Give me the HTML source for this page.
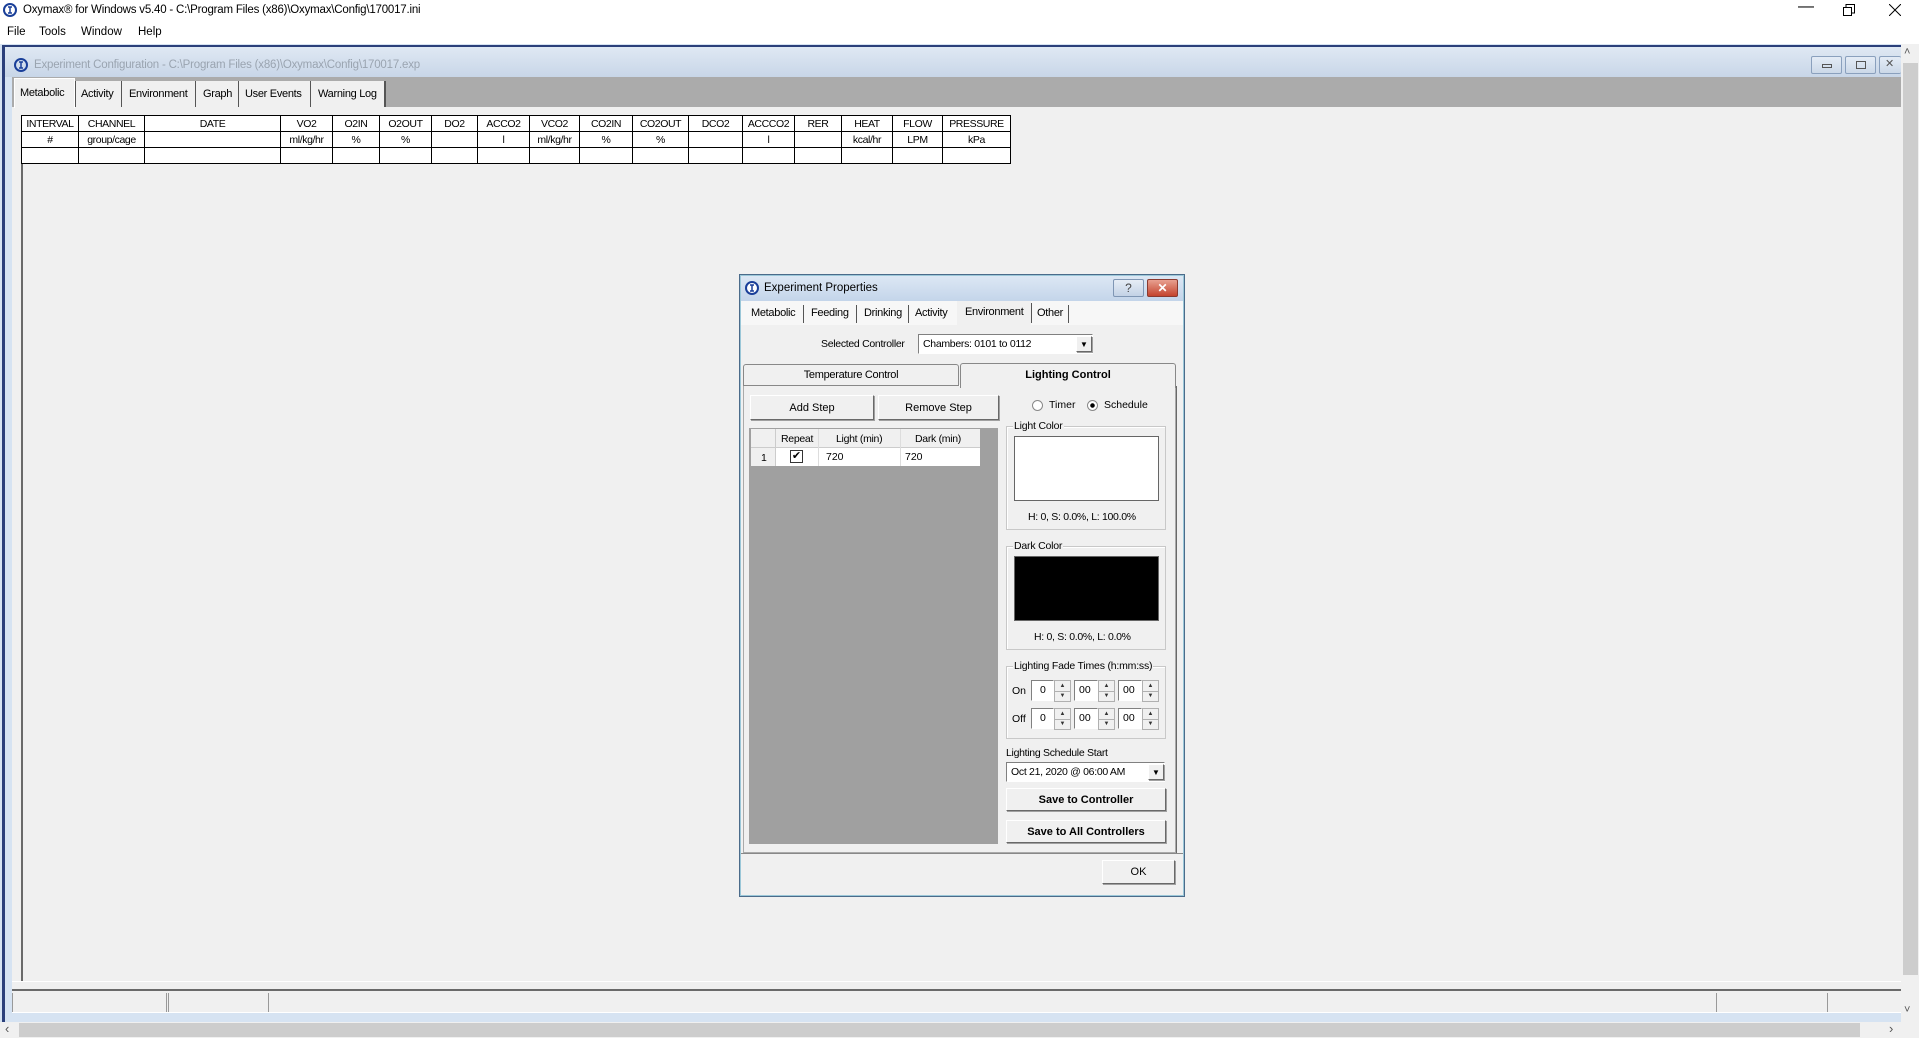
<!DOCTYPE html>
<html><head><meta charset="utf-8"><style>
*{margin:0;padding:0;box-sizing:border-box}
body{width:1919px;height:1038px;overflow:hidden;background:#f0f0f0;font-family:"Liberation Sans",sans-serif;font-size:11px;color:#000;position:relative}
.a{position:absolute}
.t{position:absolute;white-space:nowrap}
.btn{position:absolute;background:#f0f0f0;border:1px solid;border-color:#fff #696969 #696969 #fff;box-shadow:1px 1px 0 #a0a0a0;display:flex;align-items:center;justify-content:center;font-size:11px;white-space:nowrap}
.grp{position:absolute;border:1px solid #c8c8c8;box-shadow:inset 1px 1px 0 #fff}
.grp>span{position:absolute;top:-7px;left:6px;background:#f0f0f0;padding:0 1px;font-size:10.5px;white-space:nowrap;letter-spacing:-0.2px}
table.g{border-collapse:collapse;position:absolute;left:21px;top:115px;font-size:10.5px;table-layout:fixed;background:#fff}
table.g td{border:1px solid #000;height:16px;text-align:center;padding:0;letter-spacing:-0.4px;overflow:hidden;white-space:nowrap}
.fld{position:absolute;background:#fff;border:1px solid;border-color:#808080 #fff #fff #808080;font-size:10.5px;padding-left:7px;line-height:18px;white-space:nowrap}
.spin{position:absolute;width:17px;height:22px;border:1px solid #b0b0b0;background:#f0f0f0;font-size:6px;line-height:10px;text-align:center;color:#333}
.spin:after{content:"";position:absolute;left:0;right:0;top:10px;border-top:1px solid #b0b0b0}
</style></head><body>
<div class="a" style="left:0;top:0;width:1919px;height:44px;background:#fff"></div>
<svg class="a" style="left:3px;top:3px" width="14" height="14"><circle cx="7" cy="7" r="6" fill="none" stroke="#1a3f99" stroke-width="2"/><path d="M5 4h4M7 4v6M5 10h4" stroke="#1a3f99" stroke-width="1.5"/></svg>
<div class="t" style="left:23px;top:4px;font-size:11.5px;letter-spacing:-0.2px">Oxymax® for Windows v5.40 - C:\Program Files (x86)\Oxymax\Config\170017.ini</div>
<div class="t" style="left:1798px;top:-2px;font-size:16px">—</div>
<svg class="a" style="left:1843px;top:4px" width="12" height="12"><rect x="0.5" y="3.5" width="8" height="8" fill="none" stroke="#000"/><path d="M3 3V0.5h8.5V9H9" fill="none" stroke="#000"/></svg>
<svg class="a" style="left:1889px;top:4px" width="12" height="12"><path d="M0 0L12 12M12 0L0 12" stroke="#000"/></svg>
<div class="t" style="left:7px;top:26px;font-size:11.5px">File</div>
<div class="t" style="left:39px;top:26px;font-size:11.5px">Tools</div>
<div class="t" style="left:81px;top:26px;font-size:11.5px">Window</div>
<div class="t" style="left:138px;top:26px;font-size:11.5px">Help</div>

<div class="a" style="left:0;top:44px;width:1901px;height:978px;background:#d6e3f2"></div>
<div class="a" style="left:4px;top:45px;width:1897px;height:2px;background:#2b3f7a"></div>
<div class="a" style="left:2px;top:45px;width:3px;height:977px;background:#2b3f7a"></div>
<div class="a" style="left:5px;top:47px;width:1896px;height:30px;background:linear-gradient(#dfe8f3,#c8d6e8)"></div>
<svg class="a" style="left:14px;top:58px" width="14" height="14"><circle cx="7" cy="7" r="6" fill="none" stroke="#1a3f99" stroke-width="2"/><path d="M5 4h4M7 4v6M5 10h4" stroke="#1a3f99" stroke-width="1.5"/></svg>
<div class="t" style="left:34px;top:59px;color:#9aa4b0;font-size:11.5px;letter-spacing:-0.2px">Experiment Configuration - C:\Program Files (x86)\Oxymax\Config\170017.exp</div>
<div class="a" style="left:1811px;top:56px;width:31px;height:18px;border:1px solid #8aa0bd;border-radius:2px;background:linear-gradient(#e4ecf6,#cbd8e8)"><div class="a" style="left:10px;top:7px;width:10px;height:4px;border:1px solid #555"></div></div>
<div class="a" style="left:1845px;top:56px;width:31px;height:18px;border:1px solid #8aa0bd;border-radius:2px;background:linear-gradient(#e4ecf6,#cbd8e8)"><div class="a" style="left:10px;top:4px;width:10px;height:8px;border:1px solid #555"></div></div>
<div class="a" style="left:1879px;top:56px;width:22px;height:18px;border:1px solid #8aa0bd;border-right:none;border-radius:2px;background:linear-gradient(#e4ecf6,#cbd8e8);font-size:11px;color:#555;padding-left:5px">✕</div>
<div class="a" style="left:12px;top:77px;width:1889px;height:30px;background:#ababab"></div>
<div class="a" style="left:12px;top:107px;width:1889px;height:905px;background:#f0f0f0"></div>
<div class="a" style="left:14px;top:78px;width:61px;height:30px;background:#f0f0f0;border:1px solid #fff;border-bottom:none"></div>
<div class="t" style="left:20px;top:87px;font-size:11px;letter-spacing:-0.3px">Metabolic</div>
<div class="a" style="left:75px;top:81px;width:310px;height:26px;background:#f0f0f0"></div>
<div class="a" style="left:75px;top:81px;width:1px;height:26px;background:#555"></div>
<div class="a" style="left:121px;top:81px;width:1px;height:26px;background:#555"></div>
<div class="a" style="left:195px;top:81px;width:1px;height:26px;background:#555"></div>
<div class="a" style="left:238px;top:81px;width:1px;height:26px;background:#555"></div>
<div class="a" style="left:310px;top:81px;width:1px;height:26px;background:#555"></div>
<div class="a" style="left:384px;top:81px;width:2px;height:26px;background:#555"></div>
<div class="t" style="left:81px;top:88px;font-size:11px;letter-spacing:-0.3px">Activity</div>
<div class="t" style="left:129px;top:88px;font-size:11px;letter-spacing:-0.3px">Environment</div>
<div class="t" style="left:203px;top:88px;font-size:11px;letter-spacing:-0.3px">Graph</div>
<div class="t" style="left:245px;top:88px;font-size:11px;letter-spacing:-0.3px">User Events</div>
<div class="t" style="left:318px;top:88px;font-size:11px;letter-spacing:-0.3px">Warning Log</div>
<div class="a" style="left:21px;top:116px;width:2px;height:865px;background:#6a6a6a"></div>
<table class="g">
<colgroup><col style="width:57px"><col style="width:66px"><col style="width:136px"><col style="width:52px"><col style="width:47px"><col style="width:52px"><col style="width:46px"><col style="width:52px"><col style="width:50px"><col style="width:53px"><col style="width:56px"><col style="width:54px"><col style="width:52px"><col style="width:47px"><col style="width:51px"><col style="width:50px"><col style="width:68px"></colgroup>
<tr><td>INTERVAL</td><td>CHANNEL</td><td>DATE</td><td>VO2</td><td>O2IN</td><td>O2OUT</td><td>DO2</td><td>ACCO2</td><td>VCO2</td><td>CO2IN</td><td>CO2OUT</td><td>DCO2</td><td>ACCCO2</td><td>RER</td><td>HEAT</td><td>FLOW</td><td>PRESSURE</td></tr>
<tr><td>#</td><td>group/cage</td><td></td><td>ml/kg/hr</td><td>%</td><td>%</td><td></td><td>l</td><td>ml/kg/hr</td><td>%</td><td>%</td><td></td><td>l</td><td></td><td>kcal/hr</td><td>LPM</td><td>kPa</td></tr>
<tr><td></td><td></td><td></td><td></td><td></td><td></td><td></td><td></td><td></td><td></td><td></td><td></td><td></td><td></td><td></td><td></td><td></td></tr>
</table>
<div class="a" style="left:12px;top:981px;width:1889px;height:1px;background:#fff"></div>
<div class="a" style="left:12px;top:989px;width:1889px;height:2px;background:#6a6a6a"></div>
<div class="a" style="left:12px;top:993px;width:1px;height:19px;background:#999"></div>
<div class="a" style="left:166px;top:993px;width:1px;height:19px;background:#999"></div>
<div class="a" style="left:168px;top:993px;width:1px;height:19px;background:#999"></div>
<div class="a" style="left:268px;top:993px;width:1px;height:19px;background:#999"></div>
<div class="a" style="left:1716px;top:993px;width:1px;height:19px;background:#999"></div>
<div class="a" style="left:1827px;top:993px;width:1px;height:19px;background:#999"></div>
<div class="a" style="left:12px;top:1012px;width:1889px;height:1px;background:#fff"></div>
<div class="a" style="left:1901px;top:44px;width:18px;height:978px;background:#f0f0f0"></div>
<div class="a" style="left:1903px;top:63px;width:15px;height:912px;background:#cdcdcd"></div>
<div class="t" style="left:1904px;top:46px;font-size:11px;color:#555">˄</div>
<div class="t" style="left:1904px;top:1004px;font-size:11px;color:#555">˅</div>
<div class="a" style="left:0;top:1022px;width:1919px;height:16px;background:#f0f0f0"></div>
<div class="a" style="left:19px;top:1023px;width:1841px;height:14px;background:#cdcdcd"></div>
<div class="t" style="left:5px;top:1021px;font-size:13px;color:#555">‹</div>
<div class="t" style="left:1889px;top:1021px;font-size:13px;color:#555">›</div>

<!-- dialog -->
<div class="a" style="left:739px;top:274px;width:446px;height:623px;background:#f0f0f0;border:1px solid #4b6b8a;box-shadow:inset 0 0 0 1px #9bc7d8"></div>
<div class="a" style="left:741px;top:276px;width:442px;height:25px;background:linear-gradient(#dce7f4,#c4d5ea)"></div>
<svg class="a" style="left:745px;top:281px" width="14" height="14"><circle cx="7" cy="7" r="6" fill="#fff" stroke="#1a3f99" stroke-width="2"/><path d="M5 4h4M7 4v6M5 10h4" stroke="#1a3f99" stroke-width="1.5"/></svg>
<div class="t" style="left:764px;top:282px;font-size:11.5px">Experiment Properties</div>
<div class="a" style="left:1113px;top:279px;width:31px;height:18px;border:1px solid #7f96b4;border-radius:2px;background:linear-gradient(#e6edf6,#c3d2e6);font-size:12px;color:#444;text-align:center;line-height:16px">?</div>
<div class="a" style="left:1147px;top:279px;width:31px;height:18px;border:1px solid #8a3a30;border-radius:2px;background:linear-gradient(#e8a090,#c4442e);font-size:12px;color:#fff;text-align:center;line-height:16px;font-weight:bold">✕</div>
<div class="a" style="left:741px;top:301px;width:442px;height:24px;background:#f7f7f7"></div>
<div class="a" style="left:957px;top:301px;width:74px;height:25px;background:#f0f0f0"></div>
<div class="t" style="left:751px;top:307px;font-size:11px;letter-spacing:-0.3px">Metabolic</div>
<div class="a" style="left:803px;top:305px;width:1px;height:18px;background:#555"></div>
<div class="t" style="left:811px;top:307px;font-size:11px;letter-spacing:-0.3px">Feeding</div>
<div class="a" style="left:856px;top:305px;width:1px;height:18px;background:#555"></div>
<div class="t" style="left:864px;top:307px;font-size:11px;letter-spacing:-0.3px">Drinking</div>
<div class="a" style="left:908px;top:305px;width:1px;height:18px;background:#555"></div>
<div class="t" style="left:915px;top:307px;font-size:11px;letter-spacing:-0.3px">Activity</div>
<div class="t" style="left:965px;top:306px;font-size:11px;letter-spacing:-0.3px">Environment</div>
<div class="a" style="left:1031px;top:303px;width:1px;height:20px;background:#555"></div>
<div class="t" style="left:1037px;top:307px;font-size:11px;letter-spacing:-0.3px">Other</div>
<div class="a" style="left:1068px;top:305px;width:1px;height:18px;background:#555"></div>
<div class="t" style="left:821px;top:338px;font-size:10.5px;letter-spacing:-0.3px">Selected Controller</div>
<div class="fld" style="left:918px;top:334px;width:175px;height:20px;padding-left:4px;letter-spacing:-0.3px">Chambers: 0101 to 0112</div>
<div class="btn" style="left:1076px;top:336px;width:16px;height:16px;font-size:8px">▼</div>
<div class="a" style="left:743px;top:385px;width:433px;height:468px;border:1px solid #aaa;border-top-color:#fff;box-shadow:1px 1px 0 #696969"></div>
<div class="a" style="left:743px;top:364px;width:216px;height:22px;border:1px solid #888;border-radius:3px 3px 0 0;background:#f0f0f0;font-size:11px;text-align:center;line-height:20px;letter-spacing:-0.3px">Temperature Control</div>
<div class="a" style="left:960px;top:363px;width:216px;height:25px;border:1px solid #888;border-bottom:none;border-radius:3px 3px 0 0;background:#f0f0f0;font-size:11px;font-weight:bold;text-align:center;line-height:22px">Lighting Control</div>
<div class="btn" style="left:750px;top:395px;width:124px;height:25px">Add Step</div>
<div class="btn" style="left:878px;top:395px;width:121px;height:25px">Remove Step</div>
<div class="a" style="left:749px;top:428px;width:249px;height:416px;background:#a0a0a0"></div>
<div class="a" style="left:751px;top:429px;width:229px;height:37px;background:#fff"></div>
<div class="a" style="left:751px;top:429px;width:229px;height:19px;background:#f0f0f0;border-bottom:1px solid #ccc"></div>
<div class="a" style="left:751px;top:448px;width:25px;height:18px;background:#f0f0f0"></div>
<div class="a" style="left:775px;top:429px;width:1px;height:37px;background:#ccc"></div>
<div class="a" style="left:818px;top:429px;width:1px;height:37px;background:#ddd"></div>
<div class="a" style="left:900px;top:429px;width:1px;height:37px;background:#ddd"></div>
<div class="t" style="left:781px;top:433px;font-size:10.5px;letter-spacing:-0.3px">Repeat</div>
<div class="t" style="left:836px;top:433px;font-size:10.5px;letter-spacing:-0.3px">Light (min)</div>
<div class="t" style="left:915px;top:433px;font-size:10.5px;letter-spacing:-0.3px">Dark (min)</div>
<div class="t" style="left:761px;top:452px;font-size:10.5px">1</div>
<div class="a" style="left:790px;top:450px;width:13px;height:13px;border:1px solid #333;background:#fff;font-size:11px;line-height:11px;text-align:center">✔</div>
<div class="t" style="left:826px;top:451px;font-size:10.5px">720</div>
<div class="t" style="left:905px;top:451px;font-size:10.5px">720</div>
<div class="a" style="left:1032px;top:400px;width:11px;height:11px;border-radius:50%;border:1px solid #888;background:#fff"></div>
<div class="t" style="left:1049px;top:399px;font-size:10.5px">Timer</div>
<div class="a" style="left:1087px;top:400px;width:11px;height:11px;border-radius:50%;border:1px solid #888;background:radial-gradient(#000 2px,#fff 2.5px)"></div>
<div class="t" style="left:1104px;top:399px;font-size:10.5px">Schedule</div>
<div class="grp" style="left:1006px;top:426px;width:160px;height:104px"><span>Light Color</span></div>
<div class="a" style="left:1014px;top:436px;width:145px;height:65px;background:#fff;border:1px solid #666"></div>
<div class="t" style="left:1028px;top:511px;font-size:10.5px;letter-spacing:-0.3px">H: 0, S: 0.0%, L: 100.0%</div>
<div class="grp" style="left:1006px;top:546px;width:160px;height:104px"><span>Dark Color</span></div>
<div class="a" style="left:1014px;top:556px;width:145px;height:65px;background:#000;border:1px solid #666"></div>
<div class="t" style="left:1034px;top:631px;font-size:10.5px;letter-spacing:-0.3px">H: 0, S: 0.0%, L: 0.0%</div>
<div class="grp" style="left:1006px;top:666px;width:160px;height:73px"><span>Lighting Fade Times (h:mm:ss)</span></div>
<div class="t" style="left:1012px;top:685px;font-size:10.5px">On</div>
<div class="t" style="left:1012px;top:713px;font-size:10.5px">Off</div>
<div class="fld" style="left:1031px;top:680px;width:23px;height:21px;padding-left:8px">0</div>
<div class="spin" style="left:1054px;top:680px">▲<br>▼</div>
<div class="fld" style="left:1074px;top:680px;width:24px;height:21px;padding-left:4px">00</div>
<div class="spin" style="left:1098px;top:680px">▲<br>▼</div>
<div class="fld" style="left:1118px;top:680px;width:24px;height:21px;padding-left:4px">00</div>
<div class="spin" style="left:1142px;top:680px">▲<br>▼</div>
<div class="fld" style="left:1031px;top:708px;width:23px;height:21px;padding-left:8px">0</div>
<div class="spin" style="left:1054px;top:708px">▲<br>▼</div>
<div class="fld" style="left:1074px;top:708px;width:24px;height:21px;padding-left:4px">00</div>
<div class="spin" style="left:1098px;top:708px">▲<br>▼</div>
<div class="fld" style="left:1118px;top:708px;width:24px;height:21px;padding-left:4px">00</div>
<div class="spin" style="left:1142px;top:708px">▲<br>▼</div>
<div class="t" style="left:1006px;top:747px;font-size:10.5px;letter-spacing:-0.3px">Lighting Schedule Start</div>
<div class="fld" style="left:1006px;top:762px;width:159px;height:20px;padding-left:4px;letter-spacing:-0.3px">Oct 21, 2020 @ 06:00 AM</div>
<div class="btn" style="left:1148px;top:764px;width:16px;height:16px;font-size:8px">▼</div>
<div class="btn" style="left:1006px;top:788px;width:160px;height:23px;font-weight:bold">Save to Controller</div>
<div class="btn" style="left:1006px;top:820px;width:160px;height:23px;font-weight:bold">Save to All Controllers</div>
<div class="a" style="left:741px;top:853px;width:442px;height:1px;background:#888"></div>
<div class="btn" style="left:1102px;top:860px;width:73px;height:24px">OK</div>
</body></html>
